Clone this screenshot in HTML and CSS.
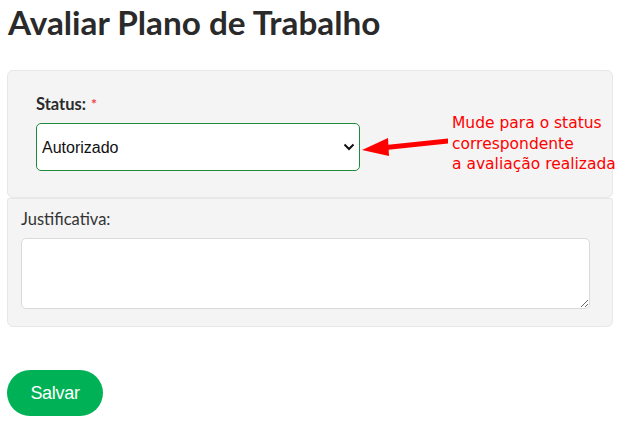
FILE: index.html
```html
<!DOCTYPE html>
<html lang="pt-BR">
<head>
    <meta charset="UTF-8">
    <meta name="viewport" content="width=device-width, initial-scale=1.0">
    <title>Avaliar Plano de Trabalho</title>
    <link rel="stylesheet" href="styles.css">
</head>
<body>
    <h1 class="title">Avaliar Plano de Trabalho</h1>
    <form action="#" class="form">
        <div class="panel panel-status">
            <div class="field">
                <label for="status" class="label-bold">Status: <span class="required">*</span></label>
                <div class="select-wrap">
                    <select id="status" class="select">
                        <option>Autorizado</option>
                        <option>Não autorizado</option>
                        <option>Em ajuste</option>
                    </select>
                    <svg class="chevron" width="12" height="8" viewBox="0 0 12 8">
                        <path d="M1.5 1.5 L6 6 L10.5 1.5" fill="none" stroke="#111" stroke-width="2"/>
                    </svg>
                </div>
            </div>
            <!-- seta da anotacao -->
            <svg class="arrow" width="90" height="24" viewBox="0 0 90 24">
                <path d="M24 11 L86 4.5 L86 9.5 L24 16 Z" fill="#f00"/>
                <path d="M0 16 L26 4 L27 22 Z" fill="#f00"/>
            </svg>
            <p class="note">Mude para o status<br>correspondente<br>a avaliação realizada</p>
        </div>
        <div class="panel panel-just">
            <label for="justificativa" class="label">Justificativa:</label>
            <textarea id="justificativa" class="textarea"></textarea>
        </div>
        <button type="submit" class="btn-save">Salvar</button>
    </form>
</body>
</html>
```
FILE: styles.css
```css
* {
    margin: 0;
    padding: 0;
    box-sizing: border-box;
}
:root {
    --panel-bg: #f4f4f4;
    --panel-border: #e7e7e7;
    --text: #2b2b2b;
    --green: #1f8a3c;
    --save: #00b156;
}
body {
    background: white;
    font-family: Lato, sans-serif;
    color: var(--text);
    width: 629px;
    height: 427px;
    overflow: hidden;
}
.title {
    font-size: 33.3px;
    font-weight: 700;
    line-height: 34px;
    padding: 5px 0 0 8px;
    color: #2a2a2a;
}
.form {
    display: flex;
    flex-direction: column;
    align-items: flex-start;
    padding: 31px 16px 0 7px;
}
.panel {
    width: 606px;
    background: var(--panel-bg);
    border: 1px solid var(--panel-border);
    border-radius: 6px;
}
.panel-status {
    position: relative;
    height: 128px;
    padding: 24px 0 0 28px;
}
.field {
    width: 324px;
}
.label-bold {
    display: block;
    font-size: 16.5px;
    font-weight: 700;
    line-height: 18px;
    margin-bottom: 10px;
}
.required {
    color: #f0414a;
    font-size: 14px;
    vertical-align: top;
    margin-left: 1px;
}
.select-wrap {
    position: relative;
}
.select {
    display: block;
    width: 324px;
    height: 48px;
    appearance: none;
    -webkit-appearance: none;
    background: white;
    border: 1px solid var(--green);
    border-radius: 5px;
    padding: 0 30px 0 5px;
    font-family: "Liberation Sans", Arial, sans-serif;
    font-size: 16px;
    color: #111;
}
.chevron {
    position: absolute;
    right: 5px;
    top: 20px;
    pointer-events: none;
}
.arrow {
    position: absolute;
    left: 354px;
    top: 63px;
}
.note {
    position: absolute;
    left: 444px;
    top: 42px;
    font-family: "DejaVu Sans", sans-serif;
    font-size: 15.5px;
    line-height: 20.5px;
    color: #f00;
    white-space: nowrap;
}
.panel-just {
    height: 129px;
    padding: 11px 23px 0 13px;
    border-top-left-radius: 2px;
    border-top-right-radius: 2px;
}
.label {
    display: block;
    font-size: 16.5px;
    line-height: 18px;
    margin-bottom: 10px;
    color: #333;
}
.textarea {
    display: block;
    width: 569px;
    height: 71px;
    border: 1px solid #dadada;
    border-radius: 5px;
    background: white;
    resize: vertical;
}
.btn-save {
    margin-top: 43px;
    width: 96px;
    height: 46px;
    border: none;
    border-radius: 23px;
    background: var(--save);
    color: white;
    font-family: "Liberation Sans", Arial, sans-serif;
    font-size: 18px;
    letter-spacing: -0.3px;
}
```
